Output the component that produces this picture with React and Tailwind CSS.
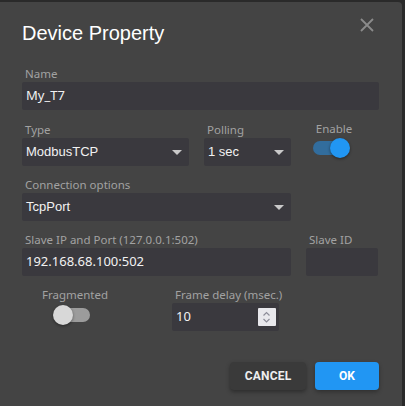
import React from 'react';

const labelCls = "h-[16px] leading-[16px] text-[11.5px] text-[#a2a2a2] font-['Noto_Sans',sans-serif] whitespace-nowrap";
const fieldCls = "h-[28px] bg-[#3a393e] rounded-[2px] flex items-center pl-[4px]";

function Arrow() {
  return (
    <svg width="10" height="5" viewBox="0 0 10 5" className="shrink-0">
      <path d="M0 0 L10 0 L5 5 Z" fill="#c9c9c9" />
    </svg>
  );
}

function Select({ value, width }) {
  return (
    <div className={`${fieldCls} justify-between pr-[7px] ${width}`}>
      <span className="text-[13px] text-[#f2f2f2] font-['Liberation_Sans',Arial,sans-serif]">{value}</span>
      <Arrow />
    </div>
  );
}

function Input({ value, width, children }) {
  return (
    <div className={`${fieldCls} ${width} justify-between pr-[3px]`}>
      <span className="text-[13px] text-[#f2f2f2] font-['Noto_Sans',sans-serif]">{value}</span>
      {children}
    </div>
  );
}

function Toggle({ on }) {
  return (
    <div className="relative w-[40px] h-[20px] flex items-center">
      <div className={`mx-[3px] w-[34px] h-[14px] rounded-full ${on ? 'bg-[#326d9d]' : 'bg-[#9c9c9c]'}`} />
      <div
        className={`absolute top-0 w-[20px] h-[20px] rounded-full shadow-[0_1px_3px_rgba(0,0,0,0.45)] ${on ? 'right-0 bg-[#2196f3]' : 'left-0 bg-[#d8d8d8]'}`}
      />
    </div>
  );
}

export default function App() {
  return (
    <div className="w-[405px] h-[406px] bg-[#2a2a2a] pt-[2px] overflow-hidden">
      <div className="w-[402px] h-[404px] bg-[#444444] rounded-tr-[4px] pl-[22px] flex flex-col">
        {/* Title */}
        <div className="flex justify-between items-start pt-[19px] pr-[28px]">
          <h1 className="text-[20px] leading-[24px] text-white font-['Liberation_Sans',Arial,sans-serif]">Device Property</h1>
          <svg width="14" height="14" viewBox="0 0 14 14" className="mt-[-3px]">
            <path d="M1 1 L13 13 M13 1 L1 13" stroke="#8b8b8b" strokeWidth="1.8" />
          </svg>
        </div>

        {/* Name */}
        <div className="mt-[21px] flex flex-col">
          <div className={`${labelCls} pl-[3px]`}>Name</div>
          <Input value="My_T7" width="w-[357px]" />
        </div>

        {/* Type / Polling / Enable */}
        <div className="mt-[12px] flex">
          <div className="flex flex-col w-[167px]">
            <div className={`${labelCls} pl-[3px]`}>Type</div>
            <Select value="ModbusTCP" width="w-[167px]" />
          </div>
          <div className="flex flex-col w-[87px] ml-[15px]">
            <div className={`${labelCls} pl-[3px]`}>Polling</div>
            <Select value="1 sec" width="w-[87px]" />
          </div>
          <div className="flex flex-col items-center w-[58px] ml-[14px] mt-[-1px]">
            <div className={labelCls}>Enable</div>
            <div className="mt-[1px] mr-[8px]">
              <Toggle on />
            </div>
          </div>
        </div>

        {/* Connection options */}
        <div className="mt-[11px] flex flex-col">
          <div className={`${labelCls} pl-[3px]`}>Connection options</div>
          <Select value="TcpPort" width="w-[269px]" />
        </div>

        {/* Slave IP / Slave ID */}
        <div className="mt-[11px] flex">
          <div className="flex flex-col w-[269px]">
            <div className={`${labelCls} pl-[3px]`}>Slave IP and Port (127.0.0.1:502)</div>
            <Input value="192.168.68.100:502" width="w-[269px]" />
          </div>
          <div className="flex flex-col w-[72px] ml-[15px]">
            <div className={`${labelCls} pl-[3px]`}>Slave ID</div>
            <Input value="" width="w-[72px]" />
          </div>
        </div>

        {/* Fragmented / Frame delay */}
        <div className="mt-[11px] flex">
          <div className="flex flex-col items-center w-[106px]">
            <div className={labelCls}>Fragmented</div>
            <div className="mt-[2px] mr-[5px]">
              <Toggle on={false} />
            </div>
          </div>
          <div className="flex flex-col w-[107px] ml-[44px]">
            <div className={`${labelCls} pl-[3px]`}>Frame delay (msec.)</div>
            <Input value="10" width="w-[107px]">
              <div className="w-[18px] h-[18px] bg-[#e8e8ec] rounded-[1px]">
                <svg width="18" height="18" viewBox="0 0 18 18">
                  <path d="M5.5 7.5 L8.5 4.5 L11.5 7.5" fill="none" stroke="#8c8c98" strokeWidth="1.2" />
                  <path d="M5.5 11 L8.5 14 L11.5 11" fill="none" stroke="#8c8c98" strokeWidth="1.2" />
                </svg>
              </div>
            </Input>
          </div>
        </div>

        {/* Buttons */}
        <div className="mt-[31px] flex justify-end gap-[9px] pr-[23px]">
          <button className="w-[76px] h-[28px] rounded-[4px] bg-[#3a3a3a] shadow-[0_2px_4px_rgba(0,0,0,0.35)] text-[12px] font-bold tracking-[0.2px] text-[#eeeeee] font-['Roboto',sans-serif]">
            CANCEL
          </button>
          <button className="w-[64px] h-[28px] rounded-[4px] bg-[#2196f3] shadow-[0_2px_4px_rgba(0,0,0,0.3)] text-[12px] font-bold text-white font-['Roboto',sans-serif]">
            OK
          </button>
        </div>
      </div>
    </div>
  );
}
